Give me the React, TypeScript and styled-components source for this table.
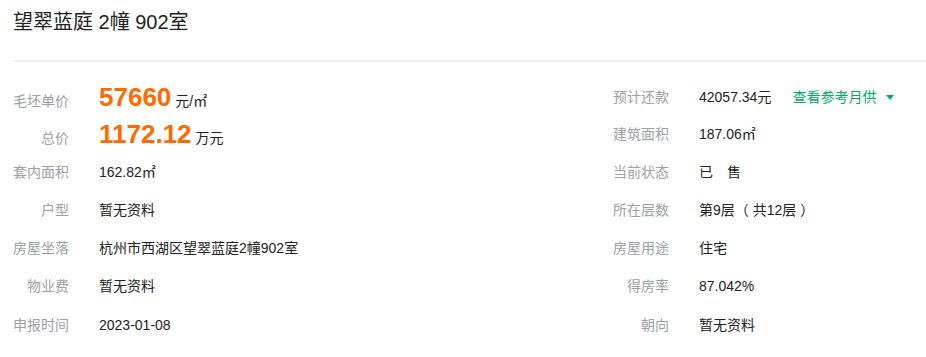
import React from 'react';
import styled, { createGlobalStyle } from 'styled-components';

const GlobalStyle = createGlobalStyle`
    body {
        margin: 0;
        background: #fff;
        font-family: 'Liberation Sans', 'Noto Sans CJK SC', sans-serif;
        color: #333;
    }
`

const Page = styled.div`
    width: 926px;
    padding-left: 13px;
    box-sizing: border-box;
`

const Title = styled.h1`
    margin: 0;
    padding-top: 2px;
    font-size: 20px;
    font-weight: normal;
    line-height: 40px;
    color: #222;
`

const Divider = styled.div`
    height: 2px;
    background: #f0f0f0;
    margin-top: 18px;
`

const Grid = styled.div`
    display: grid;
    grid-template-columns: 600px 1fr;
    padding-top: 16px;
`

const Column = styled.div`
    display: flex;
    flex-direction: column;
`

const Row = styled.div<{ $h?: number }>`
    display: flex;
    align-items: baseline;
    height: ${p => p.$h || 38}px;
    line-height: ${p => p.$h || 38}px;
    font-size: 14px;
`

const Label = styled.span`
    width: 56px;
    text-align: right;
    color: #9ca0a8;
    flex-shrink: 0;
`

const Value = styled.span`
    margin-left: 30px;
    color: #222;
    white-space: pre;
    text-spacing-trim: space-all;
`

const Price = styled.span`
    font-size: 26px;
    font-weight: bold;
    color: #ff6a00;
    margin-right: 4px;
`

const Link = styled.span`
    margin-left: 21px;
    color: #00ae66;
    display: inline-flex;
    align-items: center;
    cursor: pointer;
`

const Caret = styled.span`
    width: 0;
    height: 0;
    margin-left: 10px;
    border-left: 4px solid transparent;
    border-right: 4px solid transparent;
    border-top: 5px solid #00ae66;
`

type Item = { label: string; value: React.ReactNode; h?: number }

const left: Item[] = [
    { label: '毛坯单价', value: <><Price>57660</Price>元/㎡</> },
    { label: '总价', value: <><Price>1172.12</Price>万元</>, h: 37 },
    { label: '套内面积', value: '162.82㎡' },
    { label: '户型', value: '暂无资料' },
    { label: '房屋坐落', value: '杭州市西湖区望翠蓝庭2幢902室' },
    { label: '物业费', value: '暂无资料', h: 39 },
    { label: '申报时间', value: '2023-01-08' },
]

const right: Item[] = [
    { label: '预计还款', value: <>42057.34元<Link>查看参考月供<Caret /></Link></> },
    { label: '建筑面积', value: '187.06㎡', h: 37 },
    { label: '当前状态', value: '已\u3000售' },
    { label: '所在层数', value: '第9层（ 共12层 ）' },
    { label: '房屋用途', value: '住宅' },
    { label: '得房率', value: '87.042%', h: 39 },
    { label: '朝向', value: '暂无资料' },
]

const renderRows = (items: Item[]) =>
    items.map(item => (
        <Row key={item.label} $h={item.h}>
            <Label>{item.label}</Label>
            <Value>{item.value}</Value>
        </Row>
    ))

const App: React.FC = () => {
    return (
        <Page>
            <GlobalStyle />
            <Title>望翠蓝庭 2幢 902室</Title>
            <Divider />
            <Grid>
                <Column>{renderRows(left)}</Column>
                <Column>{renderRows(right)}</Column>
            </Grid>
        </Page>
    )
}

export default App;
